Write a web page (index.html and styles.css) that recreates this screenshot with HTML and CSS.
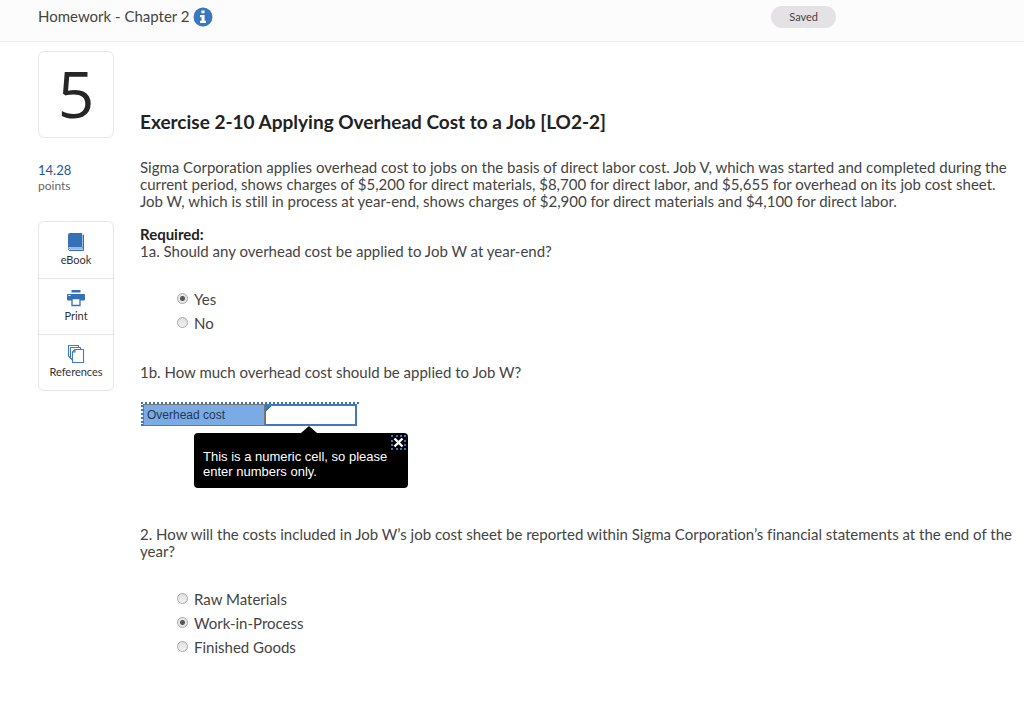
FILE: index.html
```html
<!DOCTYPE html>
<html lang="en">
<head>
<meta charset="utf-8">
<title>Homework - Chapter 2</title>
<link rel="stylesheet" href="styles.css">
</head>
<body>
<header class="topbar">
  <h1 class="title">Homework - Chapter 2</h1>
  <button class="info" type="button" aria-label="Information">
    <svg width="20" height="20" viewBox="0 0 20 20"><circle cx="10" cy="10" r="9.5" fill="#3a77bd"/><path d="M8.4 3.5h3.2v2.8H8.4zM7 8h4.6v5.8H13V16H7v-2.2h1.5v-3.6H7z" fill="#fff"/></svg>
  </button>
  <span class="saved">Saved</span>
</header>
<div class="layout">
  <aside class="side">
    <div class="number">5</div>
    <div class="points"><span class="score">14.28</span><span>points</span></div>
    <nav class="tools">
      <button class="tool" type="button">
        <svg width="20" height="20" viewBox="0 0 20 20"><path d="M4 1h12v14H4a2 2 0 0 0-2 2V3a2 2 0 0 1 2-2z" fill="#3471b7"/><path d="M17 2.5V16H4.3q-1.5 0-1.8 1.5.3 1 1.5 1H17.5V3" fill="none" stroke="#3471b7"/><path d="M4 17.3h13" stroke="#9dbbdf"/></svg>
        <span>eBook</span>
      </button>
      <button class="tool" type="button">
        <svg width="20" height="20" viewBox="0 0 20 20"><path d="M5.500 2h9v2.500h-9zM2 6h16a1 1 0 0 1 1 1v4.500a1 1 0 0 1-1 1H2a1 1 0 0 1-1-1V7a1 1 0 0 1 1-1z" fill="#3471b7"/><path d="M6 10.500h8v7H6z" fill="#fff" stroke="#3471b7" stroke-width="1.300"/><path d="M2.500 7.500h2" stroke="#fff"/></svg>
        <span>Print</span>
      </button>
      <button class="tool" type="button">
        <svg width="20" height="20" viewBox="0 0 20 20" fill="#fff" stroke="#3f7abd" stroke-width="1.100" stroke-linejoin="round"><path d="M2.500 1.500h10V14h-8l-2-2z"/><path d="M4.500 3.500h10V16h-8l-2-2z"/><path d="M9 5.500h8.500v13h-11V8z"/><path d="M9 5.500V8H6.500" fill="none"/></svg>
        <span>References</span>
      </button>
    </nav>
  </aside>
  <main class="content">
    <h2 class="heading">Exercise 2-10 Applying Overhead Cost to a Job [LO2-2]</h2>
    <p class="text">Sigma Corporation applies overhead cost to jobs on the basis of direct labor cost. Job V, which was started and completed during the current period, shows charges of $5,200 for direct materials, $8,700 for direct labor, and $5,655 for overhead on its job cost sheet. Job W, which is still in process at year-end, shows charges of $2,900 for direct materials and $4,100 for direct labor.</p>
    <h3 class="required">Required:</h3>
    <p class="text" id="q1a">1a. Should any overhead cost be applied to Job W at year-end?</p>
    <div class="choices" role="radiogroup" aria-labelledby="q1a">
      <label class="choice"><input type="radio" name="q1a" checked>Yes</label>
      <label class="choice"><input type="radio" name="q1a">No</label>
    </div>
    <p class="text">1b. How much overhead cost should be applied to Job W?</p>
    <div class="answer">
      <table class="sheet">
        <tr>
          <th scope="row"><label for="cost">Overhead cost</label></th>
          <td><input class="cell" id="cost" type="text" aria-describedby="tip"></td>
        </tr>
      </table>
      <div class="tooltip" role="tooltip">
        <p class="tiptext" id="tip">This is a numeric cell, so please enter numbers only.</p>
        <button class="close" type="button" aria-label="Close"><svg width="11" height="11" viewBox="0 0 11 11"><path d="M1.500 1.500l8 8M9.500 1.500l-8 8" stroke="#fff" stroke-width="2.400"/></svg></button>
      </div>
    </div>
    <p class="text" id="q2">2. How will the costs included in Job W’s job cost sheet be reported within Sigma Corporation’s financial statements at the end of the year?</p>
    <div class="choices" role="radiogroup" aria-labelledby="q2">
      <label class="choice"><input type="radio" name="q2">Raw Materials</label>
      <label class="choice"><input type="radio" name="q2" checked>Work-in-Process</label>
      <label class="choice"><input type="radio" name="q2">Finished Goods</label>
    </div>
  </main>
</div>
</body>
</html>
```
FILE: styles.css
```css
* { box-sizing: border-box; }
body {
  margin: 0;
  background: #fff;
  color: #444;
  font-family: Lato, "Liberation Sans", sans-serif;
  font-size: 15px;
  line-height: 17px;
  font-variant-ligatures: none;
}
h1, h2, h3, p { margin: 0; }
button { font: inherit; color: inherit; padding: 0; border: 0; background: none; }
.topbar {
  display: flex;
  align-items: center;
  min-height: 42px;
  padding: 0 188px 8px 38px;
  background: #fcfcfc;
  border-bottom: 1px solid #eee;
}
.title { font-size: 15px; font-weight: 400; }
.info { display: flex; margin-left: 3px; }
.saved {
  margin-left: auto;
  padding: 2px 18px 3px;
  border-radius: 11px;
  background: #e4e2e5;
  font-size: 11px;
}
.layout { display: flex; gap: 26px; padding: 9px 12px 0 38px; }
.side { flex: 0 0 76px; }
.number {
  padding: 10px 0 11px;
  border: 1px solid #e8e8e8;
  border-radius: 6px;
  color: #262626;
  font-family: "Open Sans", Lato, sans-serif;
  font-size: 64px;
  line-height: 64px;
  text-align: center;
}
.points {
  display: flex;
  flex-direction: column;
  margin: 24px 0 27px;
  font-size: 12px;
  line-height: 16px;
  color: #666;
}
.score { color: #1f57a0; font-size: 13px; }
.tools { border: 1px solid #e5e5e5; border-radius: 6px; }
.tool {
  display: flex;
  flex-direction: column;
  align-items: center;
  width: 100%;
  padding: 10px 0;
  color: #333;
  font-size: 11px;
  line-height: 16px;
}
.tool + .tool { padding-top: 9px; border-top: 1px solid #e5e5e5; }
.content { flex: 1; min-width: 0; padding-top: 60px; }
.heading { margin-bottom: 26px; font-size: 19px; line-height: 22px; color: #222; }
.required { margin-top: 16px; font-size: 15px; line-height: 17px; color: #222; }
.choices { display: flex; flex-direction: column; margin: 27px 0 29px 37px; }
.choice { display: flex; align-items: center; gap: 6px; line-height: 24px; }
.choice input {
  appearance: none;
  width: 11px;
  height: 11px;
  margin: 0 0 2px;
  border: 1px solid #aaa;
  border-radius: 50%;
  background: linear-gradient(#ddd, #f3f3f3);
}
.choice input:checked { background: radial-gradient(circle, #555 0 2px, #e6e6e6 3px); }
.answer { position: relative; width: 218px; margin: 21px 0 100px 1px; font-family: "Liberation Sans", Arial, sans-serif; }
.sheet {
  width: 100%;
  border-collapse: separate;
  border-spacing: 0;
  border-top: 2px dotted #3a74b9;
  border-left: 2px dotted #3a74b9;
}
.sheet th {
  width: 122px;
  padding: 0 3px;
  border: 1px solid #777;
  background: #7aabe5;
  color: #263850;
  font-size: 12px;
  font-weight: 400;
  line-height: 20px;
  text-align: left;
}
.sheet td { padding: 0 2px 0 0; }
.cell {
  display: block;
  width: 100%;
  height: 22px;
  border: 2px solid #3f78bd;
  border-left-width: 1px;
  background: linear-gradient(135deg, #3a74b9 4px, #fff 4px);
  outline: 0;
}
.tooltip {
  position: absolute;
  top: 31px;
  left: 53px;
  display: flex;
  width: 214px;
  padding: 16px 2px 9px 9px;
  border-radius: 4px;
  background: #000;
  color: #fff;
  font-size: 13px;
  line-height: 15px;
}
.tooltip::before {
  content: "";
  position: absolute;
  top: -7px;
  left: 107px;
  border: solid transparent;
  border-width: 0 8px 7px;
  border-bottom-color: #000;
}
.tiptext { flex: 1; }
.close { position: absolute; top: 2px; right: 2px; display: flex; padding: 0; border: 2px dotted #3a77bd; }
```
